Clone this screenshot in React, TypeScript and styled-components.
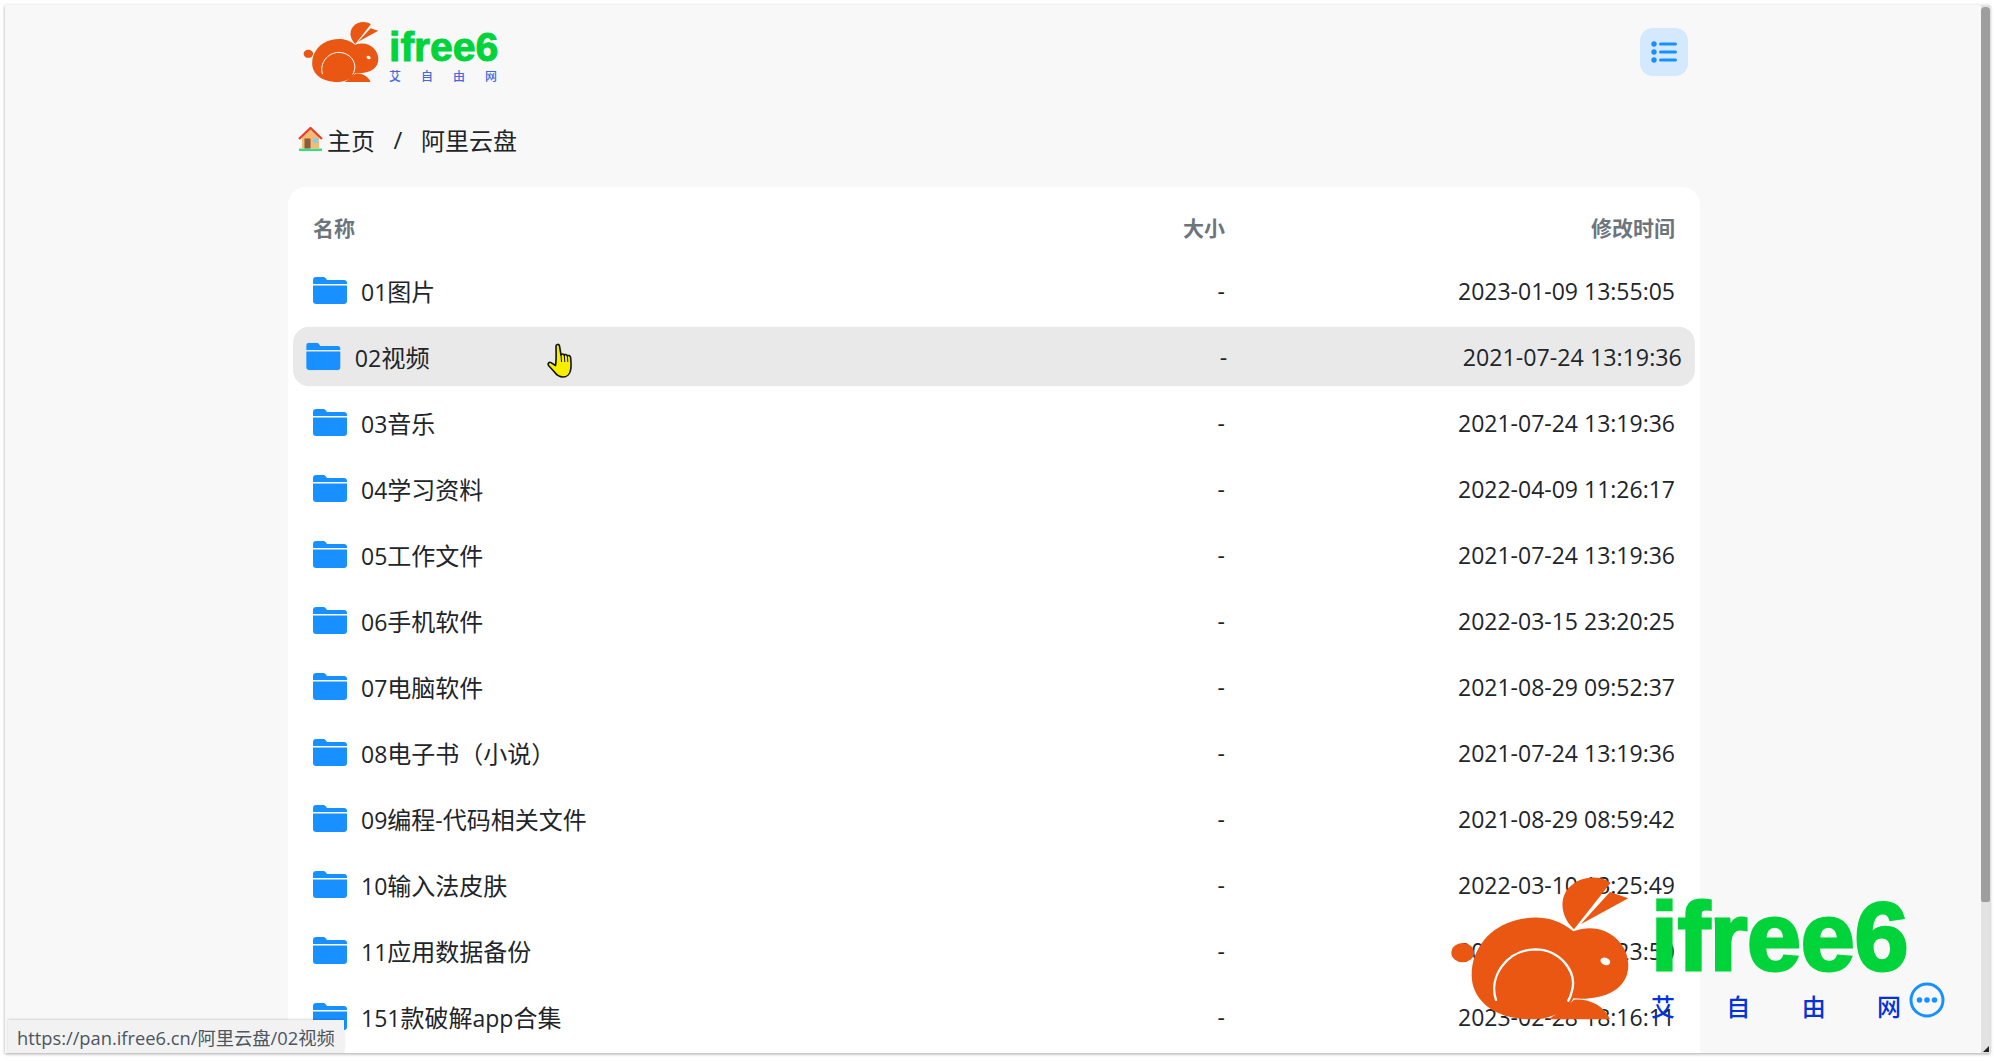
import React from 'react'
import styled, { createGlobalStyle } from 'styled-components'

const GlobalStyle = createGlobalStyle`
  html, body {
    margin: 0;
    height: 100%;
    overflow: hidden;
    background: #fff;
  }
  body {
    font-family: "Open Sans", "Noto Sans CJK SC", sans-serif;
    color: #212529;
  }
`

const BLUE = '#1890ff'
const ORANGE = '#e95713'
const GREEN = '#00d43a'

const Screen = styled.div`
  height: 1061px;
  padding: 5px 7px 8px 5px;
  box-sizing: border-box;
`

const Frame = styled.div`
  position: relative;
  display: flex;
  height: 100%;
  overflow: hidden;
  background: #f8f8f8;
  box-shadow: 0 1px 3px rgba(0, 0, 0, 0.35);
`

const Main = styled.main`
  flex: 1;
  padding-left: 2px;
  min-width: 0;
`

const Column = styled.div`
  width: 1412px;
  margin: 0 auto;
`

const Header = styled.header`
  display: flex;
  align-items: center;
  justify-content: space-between;
  height: 94px;
  padding: 0 12px 0 15px;
`

const MenuButton = styled.button`
  display: flex;
  align-items: center;
  justify-content: center;
  width: 48px;
  height: 48px;
  padding: 0;
  border: 0;
  border-radius: 13px;
  background: #d5e9fe;
`

const Crumbs = styled.nav`
  display: flex;
  align-items: center;
  height: 40px;
  margin-top: 20px;
  padding-left: 10px;
  margin-bottom: 28px;
  font-size: 24px;
`

const CrumbLink = styled.span`
  display: flex;
  align-items: center;
  gap: 4px;
`

const CrumbSlash = styled.span`
  width: 46px;
  text-align: center;
`

const Card = styled.section`
  display: flex;
  flex-direction: column;
  gap: 7px;
  padding: 12px 12px 20px;
  border-radius: 18px;
  background: #fff;
`

const TableHead = styled.div`
  display: grid;
  grid-template-columns: 1fr 200px 450px;
  align-items: center;
  height: 55px;
  padding: 0 13px;
  font-size: 21px;
  font-weight: 700;
  color: #6c757d;
`

const Row = styled.div<{ $hover?: boolean }>`
  display: grid;
  grid-template-columns: 1fr 200px 450px;
  align-items: center;
  height: 59px;
  padding: 0 13px;
  border-radius: 16px;
  font-size: 23px;
  background: ${p => (p.$hover ? '#e9e9e9' : 'transparent')};
  transform: ${p => (p.$hover ? 'scale(1.01)' : 'none')};
`

const NameCell = styled.div`
  display: flex;
  align-items: center;
  gap: 14px;
`

const Han = styled.span`
  font-size: 24px;
`

const RightCell = styled.div`
  text-align: right;
`

const Scrollbar = styled.div`
  flex: none;
  width: 9px;
  background: #e2e2e2;
`

const Thumb = styled.div`
  height: 895px;
  margin-top: 2px;
  border-radius: 4px 4px 2px 2px;
  background: #9e9e9e;
`

const BrandWrap = styled.div<{ $large?: boolean }>`
  display: flex;
  align-items: flex-end;
  gap: ${p => (p.$large ? '21px' : '10px')};
`

const BrandText = styled.div<{ $large?: boolean }>`
  display: flex;
  flex-direction: column;
  width: ${p => (p.$large ? '250px' : '108px')};
`

const BrandName = styled.div<{ $large?: boolean }>`
  font-family: "Liberation Sans", "Noto Sans", sans-serif;
  font-weight: 700;
  font-size: ${p => (p.$large ? '97px' : '41px')};
  line-height: ${p => (p.$large ? '84px' : '36px')};
  letter-spacing: ${p => (p.$large ? '-0.3px' : '0')};
  white-space: nowrap;
  color: ${GREEN};
  -webkit-text-stroke: ${p => (p.$large ? '3px' : '1px')} ${GREEN};
`

const BrandSub = styled.div<{ $large?: boolean }>`
  display: flex;
  justify-content: space-between;
  margin-top: ${p => (p.$large ? '12px' : '4px')};
  font-family: "Noto Sans CJK SC", sans-serif;
  font-weight: 500;
  font-size: ${p => (p.$large ? '24px' : '12px')};
  line-height: ${p => (p.$large ? '30px' : '14px')};
  color: ${p => (p.$large ? '#0033dd' : '#4468e0')};
`

const Watermark = styled.div`
  position: absolute;
  left: 1445px;
  bottom: 32px;
`

const ChatButton = styled.div`
  position: absolute;
  left: 1904px;
  bottom: 35px;
  width: 36px;
  height: 36px;
`

const StatusTip = styled.div`
  position: absolute;
  left: 3px;
  bottom: 0;
  display: flex;
  align-items: center;
  height: 33px;
  padding: 0 9px 0 9px;
  font-family: "Open Sans", "Noto Sans CJK SC", sans-serif;
  font-size: 18.3px;
  color: #4b5563;
  background: #f2f2f2;
  box-shadow: 0 -1px 2px rgba(0, 0, 0, 0.15);
`

const HandCursor = styled.svg`
  position: absolute;
  left: 541px;
  top: 338px;
`

const Grip = styled.div`
  position: absolute;
  right: 1px;
  bottom: 1px;
  width: 0;
  height: 0;
  border-left: 6px solid transparent;
  border-bottom: 6px solid #222;
`

const files = [
  { name: '01图片', time: '2023-01-09 13:55:05' },
  { name: '02视频', time: '2021-07-24 13:19:36', hover: true },
  { name: '03音乐', time: '2021-07-24 13:19:36' },
  { name: '04学习资料', time: '2022-04-09 11:26:17' },
  { name: '05工作文件', time: '2021-07-24 13:19:36' },
  { name: '06手机软件', time: '2022-03-15 23:20:25' },
  { name: '07电脑软件', time: '2021-08-29 09:52:37' },
  { name: '08电子书（小说）', time: '2021-07-24 13:19:36' },
  { name: '09编程-代码相关文件', time: '2021-08-29 08:59:42' },
  { name: '10输入法皮肤', time: '2022-03-10 13:25:49' },
  { name: '11应用数据备份', time: '2022-04-09 11:23:50' },
  { name: '151款破解app合集', time: '2023-02-28 18:16:11' },
]

// chinese runs sit a little larger than the digits next to them
const FileName = ({ text }: { text: string }) => (
  <span>
    {text.split(/([^\x00-\x7f]+)/).map((part, i) => (i % 2 ? <Han key={i}>{part}</Han> : part))}
  </span>
)

const Rabbit = ({ width }: { width: number }) => (
  <svg width={width} viewBox="30 15 540 438" style={{ display: 'block', flex: 'none' }}>
    <g fill={ORANGE}>
      <ellipse cx="68" cy="248" rx="34" ry="29" />
      <path d="M400 184C340 135 280 138 230 150C150 170 95 235 95 315C95 395 170 450 280 448C340 447 385 420 400 385C470 392 565 370 565 285C565 215 490 150 400 184Z" />
      <path d="M325 448C360 425 385 405 402 389C450 385 495 410 510 448Z" />
      <path d="M402 178C365 145 355 90 385 55C420 15 480 15 512 38Z" />
      <path d="M422 163L510 66L565 85Z" />
    </g>
    <ellipse cx="496" cy="274" rx="15" ry="11" transform="rotate(20 496 274)" fill="#fff" />
    <path
      d="M168 390C145 320 200 240 285 238C360 238 412 305 396 362C393 375 389 385 385 392"
      fill="none"
      stroke="#fff"
      strokeWidth="7"
      strokeLinecap="round"
    />
  </svg>
)

const Brand = ({ large }: { large?: boolean }) => (
  <BrandWrap $large={large}>
    <Rabbit width={large ? 180 : 76} />
    <BrandText $large={large}>
      <BrandName $large={large}>ifree6</BrandName>
      <BrandSub $large={large}>
        <span>艾</span>
        <span>自</span>
        <span>由</span>
        <span>网</span>
      </BrandSub>
    </BrandText>
  </BrandWrap>
)

const FolderIcon = () => (
  <svg width="34" height="27" viewBox="0 0 34 27" style={{ flex: 'none' }}>
    <path
      d="M0 5V3C0 1.2 1.2 0 3 0H10C11.5 0 12.3.6 13 1.6L14 3H31C32.8 3 34 4.2 34 6V7H0Z"
      fill={BLUE}
    />
    <path d="M0 8.5H34V24C34 25.8 32.8 27 31 27H3C1.2 27 0 25.8 0 24Z" fill={BLUE} />
  </svg>
)

const ListIcon = () => (
  <svg width="26" height="22" viewBox="0 0 26 22" fill={BLUE}>
    <circle cx="3" cy="3" r="2.7" />
    <circle cx="3" cy="11" r="2.7" />
    <circle cx="3" cy="19" r="2.7" />
    <rect x="8" y="1.5" width="18" height="3" rx="1.5" />
    <rect x="8" y="9.5" width="18" height="3" rx="1.5" />
    <rect x="8" y="17.5" width="18" height="3" rx="1.5" />
  </svg>
)

const HomeEmoji = () => (
  <svg width="25" height="24" viewBox="0 0 25 24">
    <rect x="1" y="21.5" width="23" height="2.5" fill="#2fe08a" />
    <path d="M4 10L12.5 2L21 10V21.5H4Z" fill="#f4bb72" />
    <path d="M1 12L12.5 1L24 12" fill="none" stroke="#ee3a2c" strokeWidth="2.2" />
    <rect x="6.5" y="11.5" width="6" height="10" fill="#8c5a3c" />
    <circle cx="17.5" cy="13.5" r="2.8" fill="#8ccbf0" />
  </svg>
)

const App: React.FC = () => (
  <Screen>
    <GlobalStyle />
    <Frame>
      <Main>
        <Column>
          <Header>
            <Brand />
            <MenuButton aria-label="menu">
              <ListIcon />
            </MenuButton>
          </Header>
          <Crumbs>
            <CrumbLink>
              <HomeEmoji />
              主页
            </CrumbLink>
            <CrumbSlash>/</CrumbSlash>
            <span>阿里云盘</span>
          </Crumbs>
          <Card>
            <TableHead>
              <span>名称</span>
              <RightCell>大小</RightCell>
              <RightCell>修改时间</RightCell>
            </TableHead>
            {files.map(file => (
              <Row key={file.name} $hover={file.hover}>
                <NameCell>
                  <FolderIcon />
                  <FileName text={file.name} />
                </NameCell>
                <RightCell>-</RightCell>
                <RightCell>{file.time}</RightCell>
              </Row>
            ))}
          </Card>
        </Column>
      </Main>
      <Scrollbar>
        <Thumb />
      </Scrollbar>
      <Watermark>
        <Brand large />
      </Watermark>
      <ChatButton>
        <svg width="36" height="36" viewBox="0 0 36 36">
          <circle cx="18" cy="18" r="16" fill="none" stroke={BLUE} strokeWidth="3" />
          <circle cx="10.5" cy="18" r="2.8" fill={BLUE} />
          <circle cx="18" cy="18" r="2.8" fill={BLUE} />
          <circle cx="25.5" cy="18" r="2.8" fill={BLUE} />
        </svg>
      </ChatButton>
      <StatusTip>https://pan.ifree6.cn/阿里云盘/02视频</StatusTip>
      <HandCursor width="28" height="36" viewBox="0 0 28 36">
        <path
          d="M10 3C10 1 13 .8 13.5 3L15 12C15.5 10.5 18 10.6 18.3 12.4C18.8 11 21 11.2 21.4 13C22 12 24.4 12.4 24.6 14.4C25 18 25.4 23 24.6 27C24 31 21 34 17 34C13 34 10.5 32 8 28.5L2.5 22.5C1.2 21 3 18.6 5 19.6L9.5 22.5C10.6 16 10 9 10 3Z"
          fill="#f6ee00"
          stroke="#111"
          strokeWidth="1.6"
          strokeLinejoin="round"
        />
        <path d="M15 12L15.5 19M18.3 12.4L18.8 19M21.4 13L21.8 19" stroke="#111" strokeWidth="1" fill="none" />
      </HandCursor>
      <Grip />
    </Frame>
  </Screen>
)

export default App
